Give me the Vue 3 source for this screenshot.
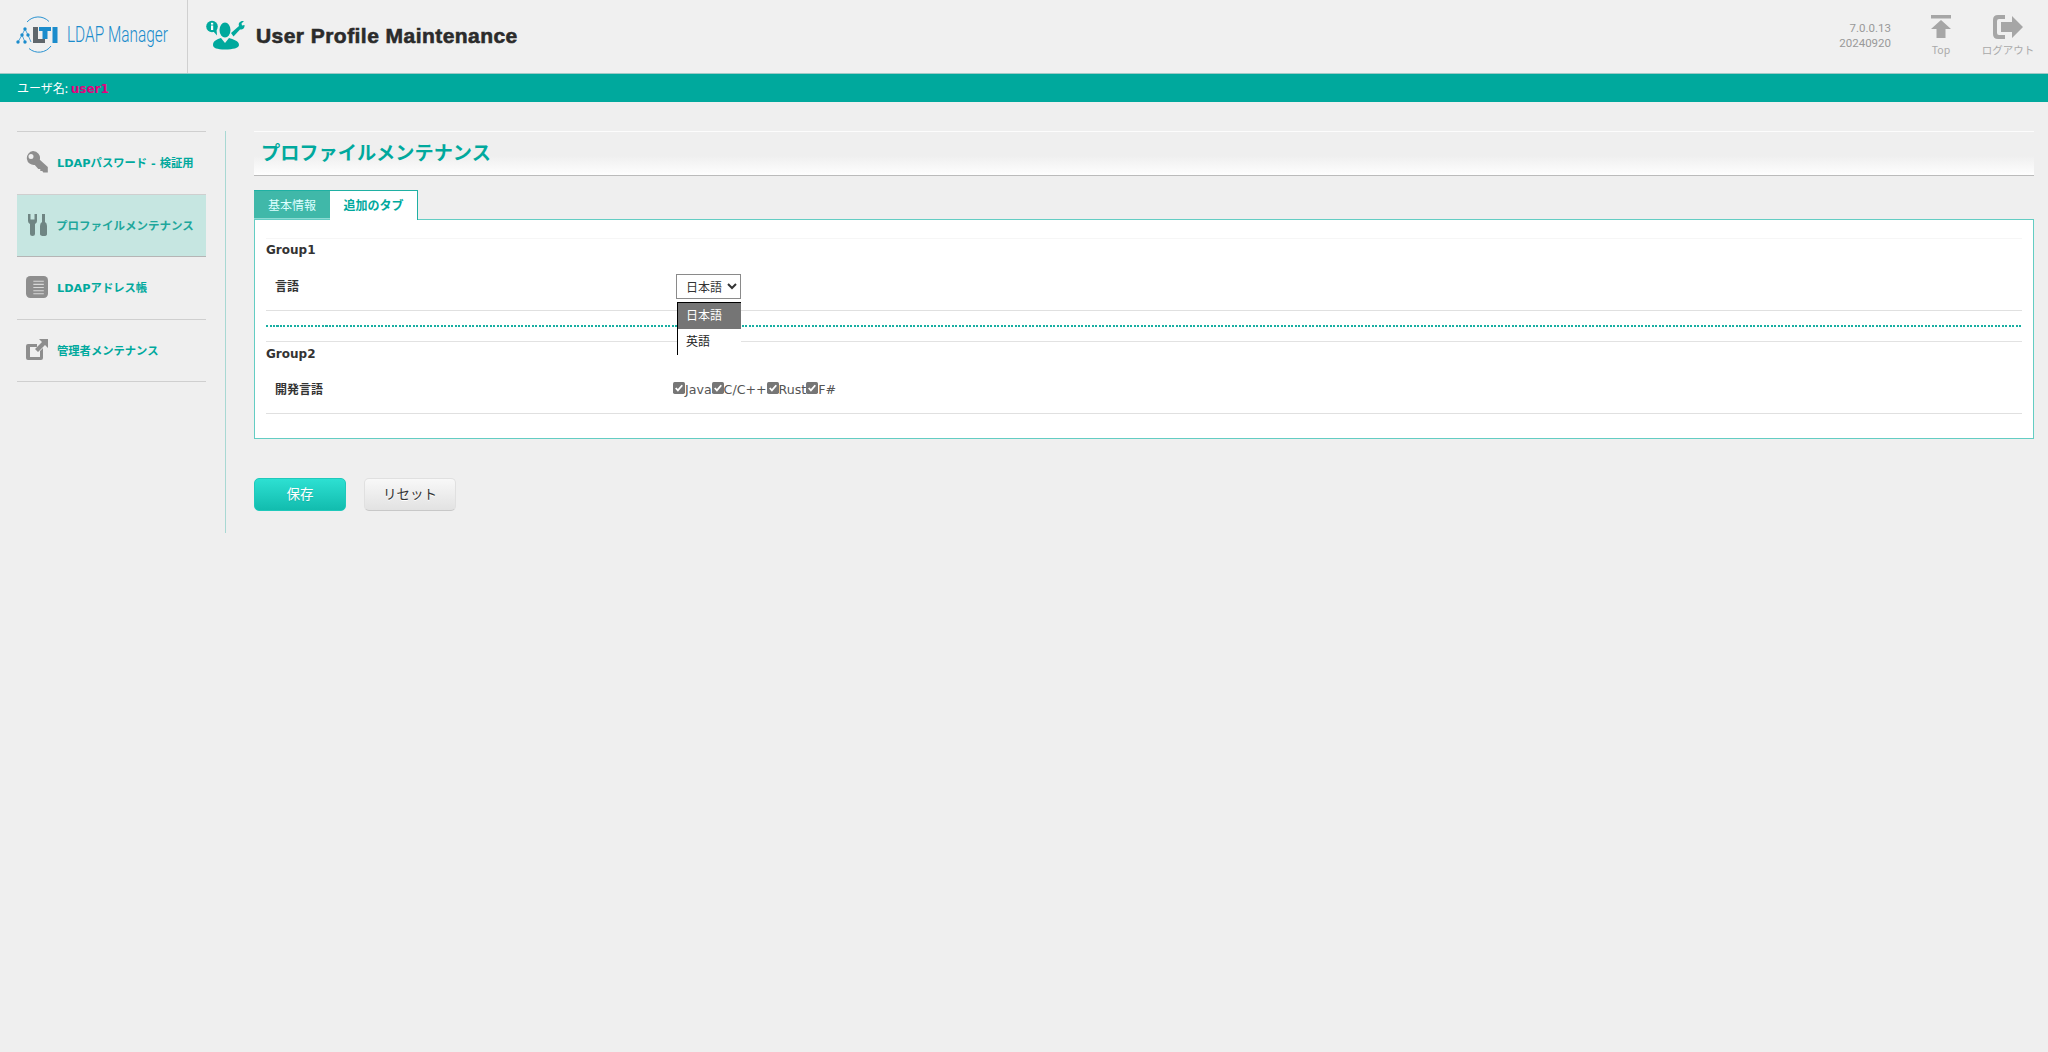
<script setup>
const menu = [
  { label: 'LDAPパスワード - 検証用', icon: 'key' },
  { label: 'プロファイルメンテナンス', icon: 'tools', active: true },
  { label: 'LDAPアドレス帳', icon: 'book' },
  { label: '管理者メンテナンス', icon: 'ext' },
]
const langs = ['Java', 'C/C++', 'Rust', 'F#']
</script>

<template>
  <div class="page">
    <header class="top">
      <div class="logo">
        <svg width="60" height="40" viewBox="0 0 60 40">
          <path d="M27 7 A15 15 0 0 1 49 6.500" fill="none" stroke="#2b93d1" stroke-width="1"/>
          <path d="M51 31 A15 15 0 0 1 29 33.500" fill="none" stroke="#2b93d1" stroke-width="1"/>
          <path d="M25 14 L22 20 L18 27 M22 20 L25 27 M25 14 L28 20 L31 27" stroke="#2b93d1" stroke-width=".8" fill="none"/>
          <g fill="#1b8ccc">
            <circle cx="25" cy="14" r="1.700"/><circle cx="22" cy="20" r="1.700"/><circle cx="28" cy="20" r="1.700"/>
            <circle cx="18" cy="27" r="1.700"/><circle cx="25" cy="27" r="1.700"/>
          </g>
          <path d="M33 12h5v12h7v4H33z" fill="#5f666b"/>
          <path d="M39 12h12v4h-3.500v8h-5v-8H39z" fill="#1b8ccc"/>
          <path d="M52.500 12h5v16h-5z" fill="#1b8ccc"/>
        </svg>
        <span class="logotext">LDAP Manager</span>
      </div>
      <div class="pagehead">
        <svg width="39" height="30" viewBox="0 0 39 30">
          <circle cx="6" cy="6.500" r="5.800" fill="#00a99d"/>
          <path d="M7 11 L11 15.500 L10.500 9 Z" fill="#00a99d"/>
          <rect x="5" y="5.500" width="2.200" height="4.500" fill="#fff"/>
          <rect x="5" y="2.800" width="2.200" height="1.800" fill="#fff"/>
          <ellipse cx="19" cy="10" rx="5.500" ry="7.500" fill="#00a99d"/>
          <path d="M7 25 C7 20.500 11 19.500 15 18 L19 23 L23 18 C27 19.500 33 20.500 33 25 C33 28 27 29.500 19 29.500 C11 29.500 7 28 7 25Z" fill="#00a99d"/>
          <path d="M25 13 L33 6 C32 3 34 0.500 38 1 L35.500 3.500 L36 5.500 L38.500 5 C39 8.500 36 10 34 9.500 L27.500 16.500Z" fill="#00a99d"/>
        </svg>
        <h1>User Profile Maintenance</h1>
      </div>
      <div class="tools">
        <div class="ver">7.0.0.13<br>20240920</div>
        <div class="tool top-tool">
          <svg width="20" height="24" viewBox="0 0 20 24"><path d="M0 0h20v3.500H0zM10 5l10 9h-5.500v9h-9v-9H0z" fill="#a6a6a6"/></svg>
          <span>Top</span>
        </div>
        <div class="tool">
          <svg width="31" height="24" viewBox="0 0 31 24"><path d="M12 0v4H6q-2 0-2 2v12q0 2 2 2h6v4H5q-5 0-5-5V5q0-5 5-5z" fill="#a6a6a6"/><path d="M19 1l11 11-11 11v-6H8V7h11z" fill="#a6a6a6"/></svg>
          <span>ログアウト</span>
        </div>
      </div>
    </header>
    <div class="userbar">ユーザ名: <b>user1</b></div>
    <div class="body">
      <nav class="side">
        <a v-for="m in menu" :key="m.icon" class="item" :class="{ active: m.active }">
          <svg v-if="m.icon === 'key'" width="22" height="22" viewBox="0 0 22 22"><path fill-rule="evenodd" d="M7 0a7 7 0 0 1 6.800 8.700l8 7.300v5.500h-4.500l-1-1.500h-2v-2h-2l-3.500-4A7 7 0 1 1 7 0zM5 3a2.500 2.500 0 1 0 0 5 2.500 2.500 0 0 0 0-5z" fill="#8e8e8e"/></svg>
          <svg v-else-if="m.icon === 'tools'" width="22" height="22" viewBox="-2 0 22 22"><path d="M0 0h2.500v5.500h4V0H9v7q0 2-2 3v10q0 2-2.500 2T2 20V10Q0 9 0 7z" fill="#6f8583"/><path d="M14 0h3v8q2 1 2 4v8q0 2-3 2q-4 0-4-2v-8q0-3 2-4z" fill="#6f8583"/></svg>
          <svg v-else-if="m.icon === 'book'" width="22" height="22" viewBox="0 0 21 21"><rect width="21" height="21" rx="4" fill="#8e8e8e"/><path d="M7 5h10M7 8h10M7 11h10M7 14h10M7 17h10" stroke="#d8d8d8"/></svg>
          <svg v-else width="22" height="22" viewBox="0 0 22 22"><path d="M2 5h9v3H4v10h10v-6l3-3v10q0 2-2 2H2q-2 0-2-2V7q0-2 2-2z" fill="#8e8e8e"/><path d="M13 0h9v9l-3-3-7 7-3-3 7-7z" fill="#8e8e8e"/></svg>
          <span>{{ m.label }}</span>
        </a>
      </nav>
      <main class="main">
        <h2>プロファイルメンテナンス</h2>
        <div class="tabs">
          <div class="tab">基本情報</div>
          <div class="tab on">追加のタブ</div>
        </div>
        <section class="panel">
          <h3 class="g1">Group1</h3>
          <div class="row r1">
            <label>言語</label>
            <div class="selwrap">
              <select><option>日本語</option><option>英語</option></select>
              <div class="drop"><div class="opt sel">日本語</div><div class="opt">英語</div></div>
            </div>
          </div>
          <div class="dots"></div>
          <h3 class="g2">Group2</h3>
          <div class="row r2">
            <label>開発言語</label>
            <div class="checks">
              <template v-for="l in langs" :key="l">
                <svg class="cb" width="12" height="12" viewBox="0 0 11 11"><rect width="11" height="11" rx="1.500" fill="#767676"/><path d="M2.500 5.500l2 2.200 4-4.700" fill="none" stroke="#fff" stroke-width="1.700"/></svg>
                <span>{{ l }}</span>
              </template>
            </div>
          </div>
        </section>
        <div class="btns">
          <button class="save">保存</button>
          <button class="reset">リセット</button>
        </div>
      </main>
    </div>
  </div>
</template>

<style>
html, body { margin: 0; background: #efefef; }
</style>
<style scoped>
.page { font-family: "Noto Sans CJK JP", "Noto Sans", sans-serif; color: #333; min-height: 1052px; background: #efefef; overflow: hidden; }
.top { height: 73px; display: flex; align-items: stretch; background: #f0f0f0; border-bottom: 1px solid #9fc9c6; }
.logo { width: 187px; flex: none; border-right: 1px solid #d0d0d0; display: flex; align-items: center; }
.logo svg { display: block; margin-top: -3px; flex: none; }
.logotext { margin-left: 7px; font: 300 22px/26px Roboto, sans-serif; color: #1b8ccc; white-space: nowrap; transform: scaleX(.7); transform-origin: 0 50%; margin-top: -3px; width: 101px; }
.pagehead { display: flex; align-items: center; padding-left: 18px; gap: 11px; flex: 1; }
.pagehead svg { display: block; margin-top: -3px; }
h1 { margin: -1px 0 0; font: 700 21px "Liberation Sans", Arial, sans-serif; letter-spacing: .45px; color: #2b2b2b; -webkit-text-stroke: .6px #2b2b2b; }
.tools { display: flex; align-items: flex-start; padding-right: 14px; }
.ver { font: 11.5px/15px Roboto, sans-serif; color: #999; text-align: right; margin-top: 20px; margin-right: 24px; padding-top: 1px; }
.tool { display: flex; flex-direction: column; align-items: center; padding-top: 15px; width: 52px; font: 10.5px/14px "Noto Sans CJK JP", sans-serif; color: #aaa; white-space: nowrap; }
.top-tool { margin-right: 15px; }
.tool svg { display: block; margin-bottom: 4px; }
.userbar { height: 28px; background: #00a99d; color: #fff; font-size: 12px; line-height: 27px; padding-left: 17px; }
.userbar b { color: #e6007e; font-family: "DejaVu Sans", sans-serif; font-size: 12px; }
.body { display: flex; padding: 29px 14px 0 17px; align-items: flex-start; }
.side { width: 189px; border-top: 1px solid #cfcfcf; flex: none; }
.item { display: flex; align-items: center; height: 62.5px; box-sizing: border-box; border-bottom: 1px solid #cfcfcf; padding: 0 0 1px 9px; gap: 9px; color: #00a99d; font: 700 11.3px "DejaVu Sans", "Noto Sans CJK JP", sans-serif; }
.item svg { flex: none; width: 22px; }
.item.active { background: #c6e6e1; border-bottom-color: #b5b5b5; color: #1ea79c; gap: 8px; font-size: 11.5px; }
.main { margin-left: 19px; padding-left: 28px; border-left: 1px solid #a8d8d3; flex: 1; height: 402px; }
h2 { margin: 0; height: 45px; box-sizing: border-box; padding: 7px 0 0 7px; font-size: 19.2px; line-height: 26px; font-weight: 700; color: #00a99d; border-top: 1px solid #fcfcfc; border-bottom: 1px solid #bbb; background: linear-gradient(#efefef 55%, #fefefe); }
.tabs { display: flex; margin-top: 14px; height: 30px; position: relative; z-index: 1; }
.tab { width: 76px; height: 29px; background: #40b8a9; color: #dff; font-size: 12px; line-height: 28px; text-align: center; border-top: 1px solid #1fb0a3; border-bottom: 1px solid #8edbd3; box-sizing: border-box; }
.tab.on { width: 88px; height: 30px; background: #fff; color: #00a99d; font-weight: 700; border: 1px solid #1fb0a3; border-left: 0; border-bottom: 0; }
.panel { margin-top: -1px; background: #fff; border: 1px solid #63cdc3; height: 220px; box-sizing: border-box; padding: 18px 11px 0; }
h3 { margin: 0; font: 700 12px/16px "DejaVu Sans", sans-serif; color: #333; }
.g1 { padding-top: 3px; border-top: 1px solid #f6f6f6; }
.g2 { border-top: 1px solid #e2e2e2; padding-top: 4px; margin-top: 14px; }
.row { display: flex; border-bottom: 1px solid #e0e0e0; font-size: 12px; padding-left: 9px; box-sizing: border-box; }
.row label { width: 401px; flex: none; font-weight: 700; }
.r1 { height: 53px; padding-top: 16px; }
.r1 label { padding-top: 3px; }
.selwrap { position: relative; }
select { width: 65px; height: 25px; font: 12px "Noto Sans CJK JP", sans-serif; background: #fff; color: #333; border: 1px solid #8a8a8a; border-radius: 0; padding-left: 5px; }
.drop { position: absolute; left: 1px; top: 28px; width: 63px; border-left: 1px solid #000; border-top: 1px solid #000; background: #fff; z-index: 2; }
.opt { height: 26px; line-height: 24px; padding-left: 8px; font-size: 12px; color: #222; }
.opt.sel { background: #757575; color: #fff; }
.dots { height: 2px; margin-top: 14px; background: repeating-linear-gradient(90deg, #17aea2 0 2px, transparent 2px 3.500px); }
.r2 { height: 52px; padding-top: 18px; }
.checks { display: flex; align-items: center; height: 18px; font: 12.6px "DejaVu Sans", sans-serif; margin-left: -3px; color: #555; }
.checks .cb { flex: none; margin-top: -3px; }
.btns { display: flex; gap: 18px; margin-top: 39px; }
button { width: 92px; height: 33px; border-radius: 5px; font: 13.5px "Noto Sans CJK JP", sans-serif; padding: 0 0 3px; }
.save { background: linear-gradient(#2de0d2, #12bcae); color: #fff; border: 1px solid #1fc9bb; text-shadow: 0 1px 1px rgba(0,0,0,.1); }
.reset { background: linear-gradient(#f8f8f8, #e2e2e2); color: #333; border: 1px solid #e0e0e0; border-bottom-color: #c8c8c8; text-shadow: 0 1px 0 #fff; }
</style>
